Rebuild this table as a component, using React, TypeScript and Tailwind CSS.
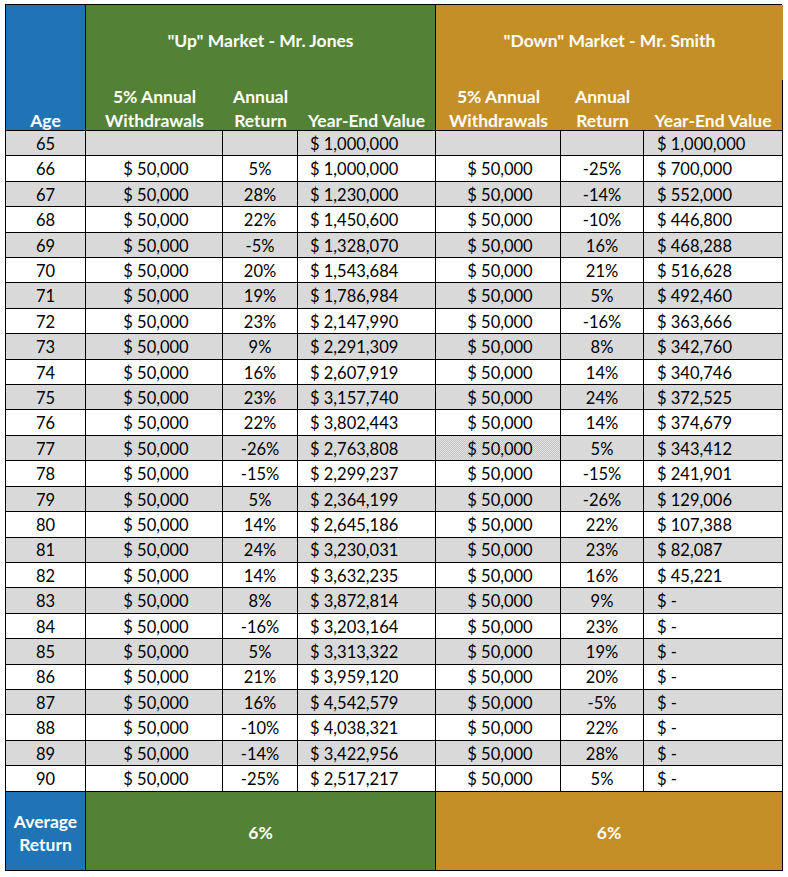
import React from "react";

const jones: [string, string, string][] = [
  ["", "", "$ 1,000,000"],
  ["$ 50,000", "5%", "$ 1,000,000"],
  ["$ 50,000", "28%", "$ 1,230,000"],
  ["$ 50,000", "22%", "$ 1,450,600"],
  ["$ 50,000", "-5%", "$ 1,328,070"],
  ["$ 50,000", "20%", "$ 1,543,684"],
  ["$ 50,000", "19%", "$ 1,786,984"],
  ["$ 50,000", "23%", "$ 2,147,990"],
  ["$ 50,000", "9%", "$ 2,291,309"],
  ["$ 50,000", "16%", "$ 2,607,919"],
  ["$ 50,000", "23%", "$ 3,157,740"],
  ["$ 50,000", "22%", "$ 3,802,443"],
  ["$ 50,000", "-26%", "$ 2,763,808"],
  ["$ 50,000", "-15%", "$ 2,299,237"],
  ["$ 50,000", "5%", "$ 2,364,199"],
  ["$ 50,000", "14%", "$ 2,645,186"],
  ["$ 50,000", "24%", "$ 3,230,031"],
  ["$ 50,000", "14%", "$ 3,632,235"],
  ["$ 50,000", "8%", "$ 3,872,814"],
  ["$ 50,000", "-16%", "$ 3,203,164"],
  ["$ 50,000", "5%", "$ 3,313,322"],
  ["$ 50,000", "21%", "$ 3,959,120"],
  ["$ 50,000", "16%", "$ 4,542,579"],
  ["$ 50,000", "-10%", "$ 4,038,321"],
  ["$ 50,000", "-14%", "$ 3,422,956"],
  ["$ 50,000", "-25%", "$ 2,517,217"],
];

const smith: [string, string, string][] = [
  ["", "", "$ 1,000,000"],
  ["$ 50,000", "-25%", "$ 700,000"],
  ["$ 50,000", "-14%", "$ 552,000"],
  ["$ 50,000", "-10%", "$ 446,800"],
  ["$ 50,000", "16%", "$ 468,288"],
  ["$ 50,000", "21%", "$ 516,628"],
  ["$ 50,000", "5%", "$ 492,460"],
  ["$ 50,000", "-16%", "$ 363,666"],
  ["$ 50,000", "8%", "$ 342,760"],
  ["$ 50,000", "14%", "$ 340,746"],
  ["$ 50,000", "24%", "$ 372,525"],
  ["$ 50,000", "14%", "$ 374,679"],
  ["$ 50,000", "5%", "$ 343,412"],
  ["$ 50,000", "-15%", "$ 241,901"],
  ["$ 50,000", "-26%", "$ 129,006"],
  ["$ 50,000", "22%", "$ 107,388"],
  ["$ 50,000", "23%", "$ 82,087"],
  ["$ 50,000", "16%", "$ 45,221"],
  ["$ 50,000", "9%", "$ -"],
  ["$ 50,000", "23%", "$ -"],
  ["$ 50,000", "19%", "$ -"],
  ["$ 50,000", "20%", "$ -"],
  ["$ 50,000", "-5%", "$ -"],
  ["$ 50,000", "22%", "$ -"],
  ["$ 50,000", "28%", "$ -"],
  ["$ 50,000", "5%", "$ -"],
];

const cell = "border-r border-b border-black flex items-center pt-[2px] whitespace-nowrap";
const sub =
  "h-[51px] border-b border-black flex flex-col items-center justify-end gap-[6px] text-white font-bold leading-[18px] text-[17.5px]";

export default function App() {
  return (
    <div
      className="bg-white w-[788px] h-[877px] pt-[4px] pl-[5px] text-[16.5px] text-black leading-none"
      style={{ fontFamily: "Lato, 'Open Sans', sans-serif" }}
    >
      <div className="grid w-[777px] grid-cols-[80px_137px_75px_138px_125px_83px_139px] border-l border-t border-black">
        {/* header */}
        <div className="row-span-2 h-[126px] bg-[#1F74B6] border-r border-b border-black flex items-end justify-center text-white font-bold text-[17.5px] leading-[18px]">
          Age
        </div>
        <div className="col-span-3 h-[75px] bg-[#538135] border-r border-black flex items-center justify-center pb-[3px] text-white font-bold text-[17.5px]">
          "Up" Market - Mr. Jones
        </div>
        <div className="col-span-3 h-[75px] bg-[#C48F26] flex items-center justify-center pb-[3px] text-white font-bold text-[17.5px]">
          "Down" Market - Mr. Smith
        </div>
        <div className={`${sub} bg-[#538135]`}>
          <span>5% Annual</span>
          <span>Withdrawals</span>
        </div>
        <div className={`${sub} bg-[#538135]`}>
          <span>Annual</span>
          <span>Return</span>
        </div>
        <div className={`${sub} bg-[#538135] border-r`}>
          <span>Year-End Value</span>
        </div>
        <div className={`${sub} bg-[#C48F26]`}>
          <span>5% Annual</span>
          <span>Withdrawals</span>
        </div>
        <div className={`${sub} bg-[#C48F26]`}>
          <span>Annual</span>
          <span>Return</span>
        </div>
        <div className={`${sub} bg-[#C48F26] border-r`}>
          <span>Year-End Value</span>
        </div>

        {/* body */}
        {jones.map((j, i) => {
          const s = smith[i];
          const bg = i % 2 === 0 ? "bg-[#D9D9D9]" : "bg-white";
          const hatched = i === 12;
          return (
            <React.Fragment key={i}>
              <div className={`${cell} ${bg} h-[25.42px] justify-center`}>{65 + i}</div>
              <div className={`${cell} ${bg} h-[25.42px] justify-center pl-[4px]`}>{j[0]}</div>
              <div className={`${cell} ${bg} h-[25.42px] justify-center`}>{j[1]}</div>
              <div className={`${cell} ${bg} h-[25.42px] pl-[12px]`}>{j[2]}</div>
              <div
                className={
                  hatched
                    ? `${cell} h-[25.42px] justify-center pl-[4px] bg-[#D9D9D9] bg-[image:repeating-conic-gradient(#c4c4c4_0%_25%,#e2e2e2_0%_50%)] bg-[length:2px_2px]`
                    : `${cell} ${bg} h-[25.42px] justify-center pl-[4px]`
                }
              >
                {s[0]}
              </div>
              <div className={`${cell} ${bg} h-[25.42px] justify-center`}>{s[1]}</div>
              <div className={`${cell} ${bg} h-[25.42px] pl-[13px]`}>{s[2]}</div>
            </React.Fragment>
          );
        })}

        {/* footer */}
        <div className="h-[79px] bg-[#1F74B6] border-r border-b border-black flex flex-col items-center justify-center pt-[5px] text-white font-bold text-[17.5px] leading-[23px]">
          <span>Average</span>
          <span>Return</span>
        </div>
        <div className="col-span-3 h-[79px] bg-[#538135] border-r border-b border-black flex items-center justify-center pt-[5px] text-white font-bold text-[17.5px]">
          6%
        </div>
        <div className="col-span-3 h-[79px] bg-[#C48F26] border-r border-b border-black flex items-center justify-center pt-[5px] text-white font-bold text-[17.5px]">
          6%
        </div>
      </div>
    </div>
  );
}
